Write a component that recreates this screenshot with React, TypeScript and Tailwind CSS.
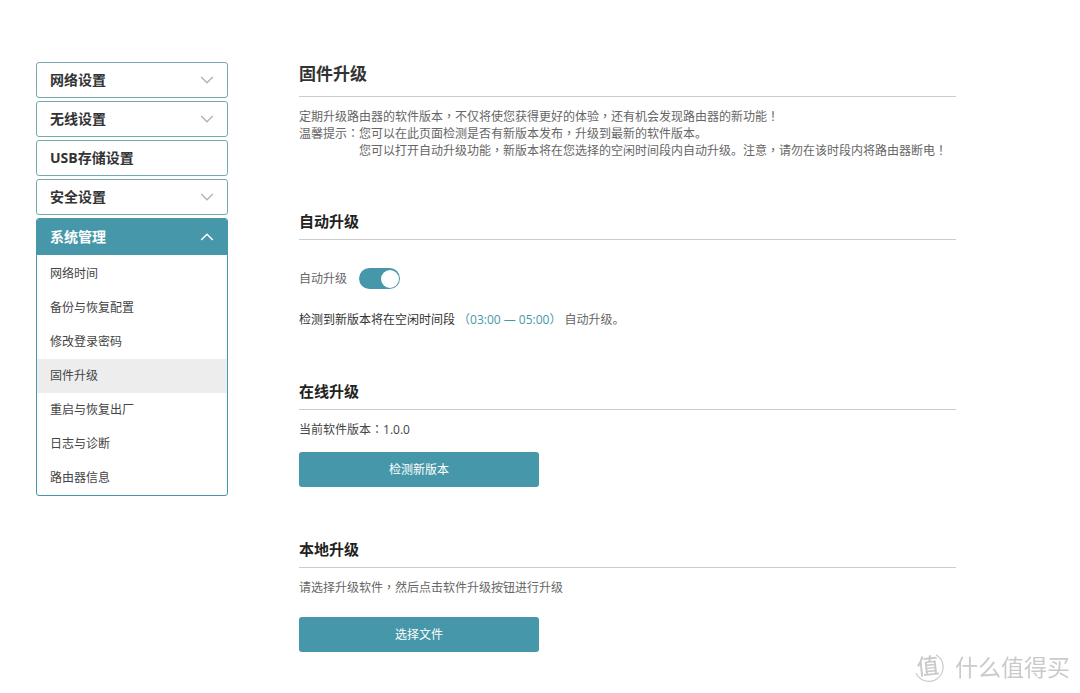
import { useState } from "react";
import type { ReactNode } from "react";
import clsx from "clsx";

const menus = [
  { label: "网络设置", expandable: true },
  { label: "无线设置", expandable: true },
  { label: "USB存储设置", expandable: false },
  { label: "安全设置", expandable: true },
];

const systemItems = [
  "网络时间",
  "备份与恢复配置",
  "修改登录密码",
  "固件升级",
  "重启与恢复出厂",
  "日志与诊断",
  "路由器信息",
];

function Chevron({ up = false }: { up?: boolean }) {
  return (
    <svg
      viewBox="0 0 14 8"
      className={clsx("w-3.5 h-2", up ? "text-white" : "text-[#b4b4b4]")}
      fill="none"
      stroke="currentColor"
      strokeWidth={1.5}
      aria-hidden="true"
    >
      <path d={up ? "M1.2 7 7 1.2 12.8 7" : "M1.2 1 7 6.8 12.8 1"} />
    </svg>
  );
}

// sets ，：！ in the face that centres them in their cell
function Centered({ text }: { text: string }) {
  return (
    <>
      {text.split(/([，：！])/).map((part, i) =>
        i % 2 === 1 ? (
          <span key={i} className="font-['Open_Sans','Noto_Sans_CJK_TC',sans-serif]">
            {part}
          </span>
        ) : (
          part
        )
      )}
    </>
  );
}

function Sidebar() {
  const [active, setActive] = useState("固件升级");

  return (
    <nav className="w-48 shrink-0 flex flex-col gap-[3px]">
      {menus.map((menu) => (
        <button
          key={menu.label}
          type="button"
          className="h-9 px-[13px] flex items-center justify-between border border-[#76a9ae] rounded-[3px] text-sm font-bold text-[#333]"
        >
          {menu.label}
          {menu.expandable && <Chevron />}
        </button>
      ))}
      <div className="border border-[#4697a9] rounded-[3px] overflow-hidden">
        <button
          type="button"
          aria-expanded="true"
          className="w-full h-9 px-[13px] flex items-center justify-between bg-[#4697a9] text-sm font-bold text-white"
        >
          系统管理
          <Chevron up />
        </button>
        <ul className="pt-0.5">
          {systemItems.map((item) => (
            <li key={item}>
              <a
                href="#"
                onClick={() => setActive(item)}
                className={clsx(
                  "block px-[13px] text-xs leading-[34px] text-[#444]",
                  item === active && "bg-[#ededed]"
                )}
              >
                {item}
              </a>
            </li>
          ))}
        </ul>
      </div>
    </nav>
  );
}

function Section({ title, children }: { title: string; children: ReactNode }) {
  return (
    <section className="mt-[52px]">
      <h2 className="pb-2 border-b border-[#ccc] text-[15px] leading-5 font-semibold text-[#222]">
        {title}
      </h2>
      {children}
    </section>
  );
}

function PrimaryButton({ children }: { children: ReactNode }) {
  return (
    <button
      type="button"
      className="block w-60 h-[35px] rounded-[3px] bg-[#4697a9] text-xs text-white"
    >
      {children}
    </button>
  );
}

function Watermark() {
  return (
    <div className="fixed right-2.5 bottom-2.5 flex items-center gap-2.5 text-[#cacaca]">
      <svg viewBox="0 0 32 32" className="w-8 h-8 overflow-visible" fill="none" aria-hidden="true">
        <path
          d="M23 3.8A14.2 14.2 0 1 1 3 22"
          stroke="currentColor"
          strokeWidth={1.2}
        />
        <text
          x="4"
          y="23"
          fontSize="22"
          fontWeight="500"
          fill="currentColor"
          transform="rotate(-6 16 16)"
        >
          值
        </text>
      </svg>
      <span className="text-[23px] leading-8">什么值得买</span>
    </div>
  );
}

export default function App() {
  const [auto, setAuto] = useState(true);

  return (
    <div className="min-h-screen bg-white flex items-start gap-[71px] pt-[62px] pl-9 pr-[124px] pb-10 font-['Open_Sans','Noto_Sans_CJK_SC',sans-serif]">
      <Sidebar />

      <main className="flex-1 min-w-0 text-xs leading-[18px] text-[#666]">
        <h1 className="pb-2.5 border-b border-[#ccc] text-[17px] leading-6 font-bold text-[#333]">
          固件升级
        </h1>
        <div className="mt-[11px] leading-[17px]">
          <p>
            <Centered text="定期升级路由器的软件版本，不仅将使您获得更好的体验，还有机会发现路由器的新功能！" />
          </p>
          <div className="flex">
            <p className="shrink-0">
              <Centered text="温馨提示：" />
            </p>
            <div>
              <p>
                <Centered text="您可以在此页面检测是否有新版本发布，升级到最新的软件版本。" />
              </p>
              <p>
                <Centered text="您可以打开自动升级功能，新版本将在您选择的空闲时间段内自动升级。注意，请勿在该时段内将路由器断电！" />
              </p>
            </div>
          </div>
        </div>

        <Section title="自动升级">
          <div className="mt-7 flex items-center gap-3">
            <label htmlFor="auto-upgrade">自动升级</label>
            <input
              id="auto-upgrade"
              type="checkbox"
              role="switch"
              checked={auto}
              onChange={(e) => setAuto(e.target.checked)}
              className="appearance-none w-[41px] h-[21px] px-px rounded-full flex items-center bg-[#bbb] checked:bg-[#4697a9] checked:justify-end before:content-[''] before:w-[18px] before:h-[18px] before:rounded-full before:bg-white"
            />
          </div>
          <p className="mt-[22px]">
            <span className="text-[#333]">检测到新版本将在空闲时间段</span>
            <span className="px-[3px] text-[#4697a9]">（03:00 — 05:00）</span>
            自动升级。
          </p>
        </Section>

        <Section title="在线升级">
          <p className="mt-[11px] mb-[13px] text-[#444]">
            <Centered text="当前软件版本：1.0.0" />
          </p>
          <PrimaryButton>检测新版本</PrimaryButton>
        </Section>

        <Section title="本地升级">
          <p className="mt-[11px] mb-5">
            <Centered text="请选择升级软件，然后点击软件升级按钮进行升级" />
          </p>
          <PrimaryButton>选择文件</PrimaryButton>
        </Section>
      </main>

      <Watermark />
    </div>
  );
}
